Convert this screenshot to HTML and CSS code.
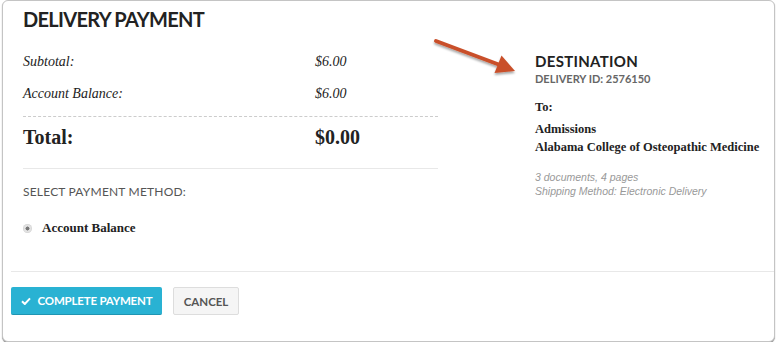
FILE: index.html
```html
<!DOCTYPE html>
<html lang="en">
<head>
    <meta charset="UTF-8">
    <meta name="viewport" content="width=device-width, initial-scale=1.0">
    <title>Delivery Payment</title>
    <link rel="stylesheet" href="styles.css">
</head>
<body>
    <div class="modal">
        <h1 class="modal-title">DELIVERY PAYMENT</h1>

        <div class="modal-body">
            <div class="summary">
                <div class="line-items">
                    <div class="row"><span>Subtotal:</span><span>$6.00</span></div>
                    <div class="row"><span>Account Balance:</span><span>$6.00</span></div>
                </div>
                <div class="row total"><span>Total:</span><span>$0.00</span></div>

                <div class="method">
                    <h4>SELECT PAYMENT METHOD:</h4>
                    <label class="radio"><span class="dot"></span>Account Balance</label>
                </div>
            </div>

            <div class="destination">
                <h2>DESTINATION</h2>
                <div class="delivery-id">DELIVERY ID: 2576150</div>
                <p class="to">To:</p>
                <p class="address">Admissions<br>Alabama College of Osteopathic Medicine</p>
                <p class="meta">3 documents, 4 pages<br>Shipping Method: Electronic Delivery</p>
            </div>
        </div>

        <div class="modal-footer">
            <button class="btn btn-primary">
                <svg width="10" height="8" viewBox="0 0 10 8"><path d="M1 4.2 L3.8 7 L9 1.4" fill="none" stroke="#fff" stroke-width="2"/></svg>
                COMPLETE PAYMENT
            </button>
            <button class="btn btn-default">CANCEL</button>
        </div>

        <!-- annotation arrow -->
        <svg class="arrow" width="100" height="50" viewBox="430 35 100 50">
            <defs>
                <filter id="sh" x="-20%" y="-40%" width="140%" height="180%">
                    <feDropShadow dx="0" dy="2" stdDeviation="1.2" flood-color="#000" flood-opacity="0.35"/>
                </filter>
            </defs>
            <g filter="url(#sh)" fill="#c9502a">
                <line x1="436" y1="41" x2="500" y2="65" stroke="#c9502a" stroke-width="4" stroke-linecap="round"/>
                <polygon points="515,71 494.5,73 501.5,55.5"/>
            </g>
        </svg>
    </div>
</body>
</html>
```

FILE: styles.css
```css
body {
    margin: 0;
    background: #fff;
    font-family: "Liberation Serif", serif;
    color: #222;
}
.modal {
    position: relative;
    margin: 0 2px;
    height: 340px;
    border: 1px solid #c4c4c4;
    border-radius: 6px;
    box-shadow: 0 1px 1px rgba(0, 0, 0, 0.45);
    background: #fff;
}
.modal-title {
    margin: 0;
    padding: 6px 20px 0;
    font-family: Lato, sans-serif;
    font-weight: 700;
    font-size: 20px;
    line-height: 25px;
    letter-spacing: -0.7px;
    color: #222;
}
.modal-body {
    display: flex;
    padding: 0 0 0 20px;
    height: 239px;
}
.summary {
    flex: none;
    width: 415px;
}
.line-items {
    padding-top: 20px;
    padding-bottom: 12px;
    border-bottom: 1px dashed #ccc;
}
.row {
    display: grid;
    grid-template-columns: 292px 1fr;
    font-style: italic;
    font-size: 14px;
    line-height: 20px;
}
.row + .row {
    margin-top: 12px;
}
.total {
    font-style: normal;
    font-weight: 700;
    font-size: 20px;
    line-height: 24px;
    padding: 8px 0 19px;
    border-bottom: 1px solid #e8e8e8;
}
.method h4 {
    margin: 16px 0 0;
    font-family: Lato, sans-serif;
    font-size: 12px;
    font-weight: 400;
    line-height: 14px;
    color: #555;
    letter-spacing: 0.2px;
}
.radio {
    display: flex;
    align-items: center;
    margin-top: 21px;
    font-size: 13px;
    font-weight: 700;
    line-height: 16px;
    color: #222;
}
.dot {
    width: 9px;
    height: 9px;
    margin-right: 10px;
    border-radius: 50%;
    background: radial-gradient(circle, #777 0 1.8px, #ddd 2.2px, #eee 4.5px);
    box-shadow: inset 0 0 0 1px #d8d8d8;
}
.destination {
    flex: none;
    margin-left: 97px;
    padding-top: 20px;
    white-space: nowrap;
}
.destination h2 {
    margin: 0;
    font-family: Lato, sans-serif;
    font-size: 15px;
    font-weight: 700;
    line-height: 18px;
    color: #222;
    letter-spacing: 0.3px;
}
.delivery-id {
    margin-top: 1px;
    font-family: Lato, sans-serif;
    font-size: 11px;
    font-weight: 700;
    line-height: 16px;
    color: #666;
}
.to {
    margin: 11px 0 0;
    font-size: 12.5px;
    font-weight: 700;
    line-height: 18px;
}
.address {
    margin: 4px 0 0;
    font-size: 12.5px;
    font-weight: 700;
    line-height: 18px;
}
.meta {
    margin: 14px 0 0;
    font-family: "Liberation Sans", sans-serif;
    font-style: italic;
    font-size: 10.5px;
    line-height: 14px;
    color: #999;
}
.modal-footer {
    margin-left: 8px;
    padding-top: 15px;
    border-top: 1px solid #e8e8e8;
    display: flex;
    gap: 11px;
}
.btn {
    height: 28px;
    font-family: Lato, sans-serif;
    font-size: 11.5px;
    font-weight: 700;
    border-radius: 2px;
    padding: 0;
    display: flex;
    align-items: center;
    gap: 7px;
    white-space: nowrap;
}
.btn-primary {
    width: 151px;
    justify-content: center;
    background: #29b2d3;
    color: #fff;
    border: 0;
    border-bottom: 1px solid #1f95b2;
    letter-spacing: -0.2px;
}
.btn-default {
    width: 66px;
    justify-content: center;
    background: #f5f5f5;
    color: #555;
    border: 1px solid #ddd;
}
.arrow {
    position: absolute;
    left: 427px;
    top: 34px;
}
```
